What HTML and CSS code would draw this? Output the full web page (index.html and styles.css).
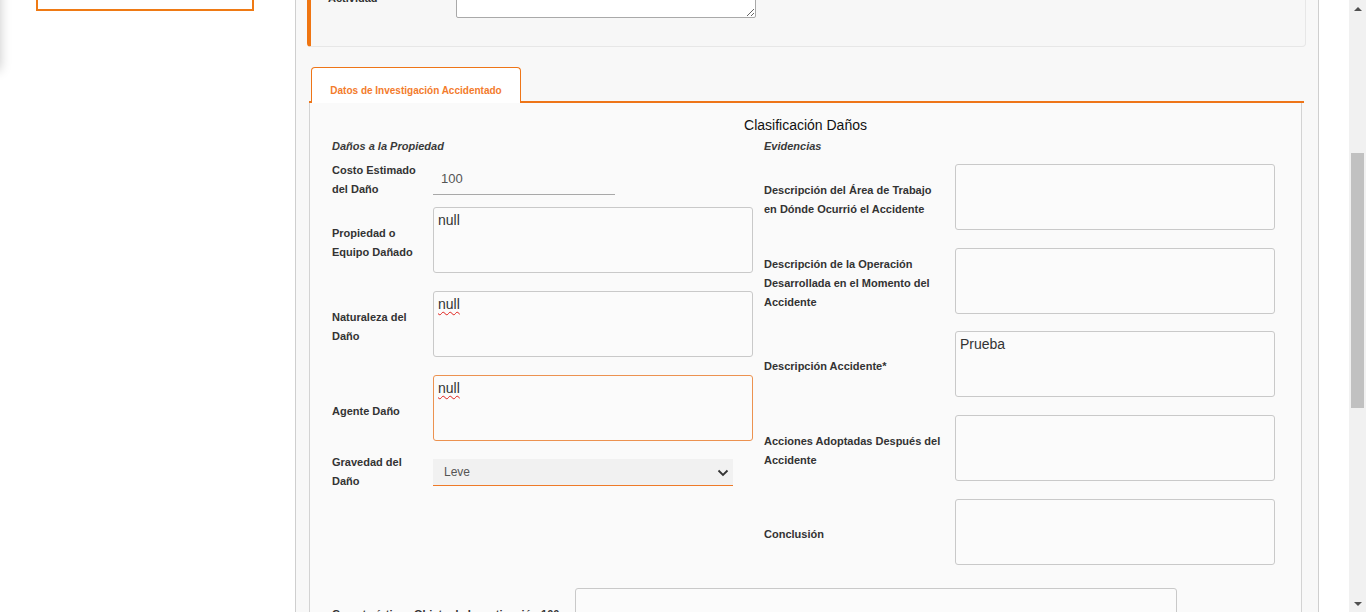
FILE: index.html
```html
<!DOCTYPE html>
<html lang="es">
<head>
<meta charset="utf-8">
<title>Datos de Investigación Accidentado</title>
<link rel="stylesheet" href="styles.css">
</head>
<body>
<div class="layout">
  <aside class="sidebar">
    <div class="drawer-shadow"></div>
    <div class="side-box"></div>
  </aside>

  <main class="main">
    <section class="card">
      <div class="card-row">
        <label class="card-label">Actividad</label>
        <textarea class="card-textarea"></textarea>
      </div>
    </section>

    <div class="tabbar">
      <div class="tab">Datos de Investigación Accidentado</div>
    </div>

    <section class="panel">
      <h2 class="panel-title">Clasificación Daños</h2>
      <div class="cols">
        <div class="col col-left">
          <div class="col-heading">Daños a la Propiedad</div>

          <div class="row row-cost">
            <label class="lbl lbl-left">Costo Estimado del Daño</label>
            <input class="cost-input" type="text" value="100">
          </div>

          <div class="row row-ta first-ta-left">
            <label class="lbl lbl-left">Propiedad o Equipo Dañado</label>
            <textarea class="ta">null</textarea>
          </div>

          <div class="row row-ta">
            <label class="lbl lbl-left">Naturaleza del Daño</label>
            <textarea class="ta spell">null</textarea>
          </div>

          <div class="row row-ta">
            <label class="lbl lbl-left">Agente Daño</label>
            <textarea class="ta spell focused">null</textarea>
          </div>

          <div class="row row-select">
            <label class="lbl lbl-left">Gravedad del Daño</label>
            <div class="select-wrap">
              <select class="select"><option>Leve</option></select>
              <svg class="chev" width="12" height="8" viewBox="0 0 12 8"><path d="M1.5 1.5 L6 6 L10.5 1.5" fill="none" stroke="#333" stroke-width="1.8"/></svg>
            </div>
          </div>
        </div>

        <div class="col col-right">
          <div class="col-heading">Evidencias</div>

          <div class="row row-ta first-ta-right">
            <label class="lbl lbl-right">Descripción del Área de Trabajo en Dónde Ocurrió el Accidente</label>
            <textarea class="ta"></textarea>
          </div>

          <div class="row row-ta">
            <label class="lbl lbl-right">Descripción de la Operación Desarrollada en el Momento del Accidente</label>
            <textarea class="ta"></textarea>
          </div>

          <div class="row row-ta">
            <label class="lbl lbl-right">Descripción Accidente*</label>
            <textarea class="ta">Prueba</textarea>
          </div>

          <div class="row row-ta">
            <label class="lbl lbl-right">Acciones Adoptadas Después del Accidente</label>
            <textarea class="ta"></textarea>
          </div>

          <div class="row row-ta">
            <label class="lbl lbl-right">Conclusión</label>
            <textarea class="ta"></textarea>
          </div>
        </div>
      </div>

      <div class="row row-ta row-bottom">
        <label class="lbl lbl-bottom">Características Objeto de Investigación 100 caracteres</label>
        <textarea class="ta ta-wide"></textarea>
      </div>
    </section>
  </main>

  <div class="gutter"></div>

  <div class="scrollbar">
    <div class="sb-arrow sb-up"></div>
    <div class="sb-track"><div class="sb-thumb"></div></div>
    <div class="sb-arrow sb-down"></div>
  </div>
</div>
</body>
</html>
```

FILE: styles.css
```css
* { box-sizing: border-box; }

html, body {
  margin: 0;
  padding: 0;
  height: 612px;
  overflow: hidden;
  background: #ffffff;
  font-family: "Liberation Sans", Arial, sans-serif;
  color: #333;
}

.layout {
  display: flex;
  height: 612px;
}

/* ---------- sidebar ---------- */
.sidebar {
  position: relative;
  width: 295px;
  flex: none;
  background: #fff;
}

.drawer-shadow {
  position: absolute;
  left: -20px;
  top: -20px;
  width: 20px;
  height: 90px;
  box-shadow: 0 0 12px rgba(0, 0, 0, 0.22);
  background: #fff;
}

.side-box {
  margin-left: 36px;
  width: 218px;
  height: 11px;
  border: 2px solid #ef7a14;
  border-top: none;
}

/* ---------- main ---------- */
.main {
  width: 1024px;
  flex: none;
  height: 612px;
  overflow: hidden;
  background: #f8f8f8;
  border-left: 1px solid #cfcfcf;
  border-right: 1px solid #cfcfcf;
  padding: 0 11px 0 11px;
}

.card {
  margin-top: -33px;
  margin-right: 1px;
  background: #f7f7f7;
  border: 1px solid #e7e7e7;
  border-left: 4px solid #ef7512;
  border-radius: 4px;
  padding: 10px 0 28px 17px;
}

.card-row {
  display: flex;
  align-items: center;
}

.card-label {
  width: 128px;
  font-size: 11px;
  font-weight: bold;
  line-height: 19px;
  color: #333;
}

.card-textarea {
  width: 300px;
  height: 40px;
  border: 1px solid #a9a9a9;
  border-radius: 2px;
  background: #fff;
  font-family: inherit;
}

/* ---------- tabs ---------- */
.tabbar {
  display: flex;
  margin-top: 20px;
  margin-left: 2px;
  margin-right: 3px;
  border-bottom: 2px solid #ee7518;
}

.tab {
  margin-left: 2px;
  margin-bottom: -2px;
  width: 210px;
  height: 36px;
  padding-top: 17px;
  text-align: center;
  background: #fff;
  border: 1px solid #ee7518;
  border-bottom: none;
  border-radius: 4px 4px 0 0;
  font-size: 10px;
  font-weight: bold;
  line-height: 12px;
  color: #f37b2c;
}

/* ---------- panel ---------- */
.panel {
  margin-left: 2px;
  margin-right: 5px;
  height: 560px;
  background: #fafafa;
  border-left: 1px solid #d3d3d3;
  border-right: 1px solid #d3d3d3;
  padding-left: 22px;
}

.panel-title {
  margin: 0 0 0 -22px;
  padding-top: 12px;
  text-align: center;
  font-size: 14px;
  line-height: 20px;
  font-weight: normal;
  color: #111;
}

.cols {
  display: grid;
  grid-template-columns: 432px 1fr;
}

.col {
  display: flex;
  flex-direction: column;
}

.col-heading {
  margin-top: 2px;
  font-size: 11px;
  line-height: 18px;
  font-style: italic;
  font-weight: bold;
  color: #3a3a3a;
}

.row {
  display: flex;
  align-items: center;
}

.lbl {
  font-size: 11px;
  font-weight: bold;
  line-height: 19px;
  color: #333;
}

.lbl-left { width: 90px; margin-right: 11px; }
.lbl-right { width: 182px; margin-right: 9px; }
.lbl-bottom { width: 232px; margin-right: 11px; }

.row-ta .lbl { padding-top: 6px; }
.col-right .row-ta .lbl { padding-top: 5px; }

.row-cost {
  margin-top: 6px;
  align-items: flex-start;
  height: 38px;
}

.cost-input {
  margin-top: 2px;
  width: 182px;
  height: 32px;
  border: none;
  border-bottom: 1px solid #a8a8a8;
  background: transparent;
  padding: 0 8px;
  font-family: inherit;
  font-size: 13px;
  color: #555;
  outline: none;
}

.first-ta-left { margin-top: 8px; }
.first-ta-right { margin-top: 9px; }

.row-ta + .row-ta { margin-top: 18px; }
.col-right .row-ta + .row-ta { margin-top: 17.7px; }
.row-ta + .row-select { margin-top: 12px; }

.ta {
  width: 320px;
  height: 66px;
  resize: none;
  border: 1px solid #c9c9c9;
  border-radius: 3px;
  background: #fbfbfb;
  padding: 4px 4px;
  font-family: inherit;
  font-size: 14px;
  line-height: 16px;
  color: #333;
  outline: none;
}

.ta.spell {
  text-decoration: underline wavy #e0201a;
  text-decoration-thickness: 1px;
  text-underline-offset: 2px;
}

.ta.focused { border-color: #ec9250; }

.ta-wide { width: 602px; }

.row-bottom { margin-top: 23px; }

.select-wrap {
  position: relative;
  width: 300px;
  height: 27px;
}

.select {
  appearance: none;
  -webkit-appearance: none;
  width: 300px;
  height: 27px;
  border: none;
  border-bottom: 1px solid #ee7a28;
  border-radius: 0;
  background: #f1f1f1;
  padding: 0 0 0 11px;
  font-family: inherit;
  font-size: 12px;
  color: #555;
  outline: none;
}

.chev {
  position: absolute;
  right: 4px;
  top: 10px;
  pointer-events: none;
}

/* ---------- right gutter + scrollbar ---------- */
.gutter {
  width: 30px;
  flex: none;
  background: #fff;
}

.scrollbar {
  width: 17px;
  flex: none;
  display: flex;
  flex-direction: column;
  background: #f1f1f1;
}

.sb-arrow {
  height: 17px;
  flex: none;
  display: flex;
  align-items: center;
  justify-content: center;
}

.sb-up::before {
  content: "";
  border-left: 4px solid transparent;
  border-right: 4px solid transparent;
  border-bottom: 4px solid #505050;
}

.sb-down::before {
  content: "";
  border-left: 4px solid transparent;
  border-right: 4px solid transparent;
  border-top: 4px solid #505050;
}

.sb-track {
  flex: 1;
  padding: 136px 2px 0 2px;
}

.sb-thumb {
  height: 255px;
  background: #c1c1c1;
}
```
